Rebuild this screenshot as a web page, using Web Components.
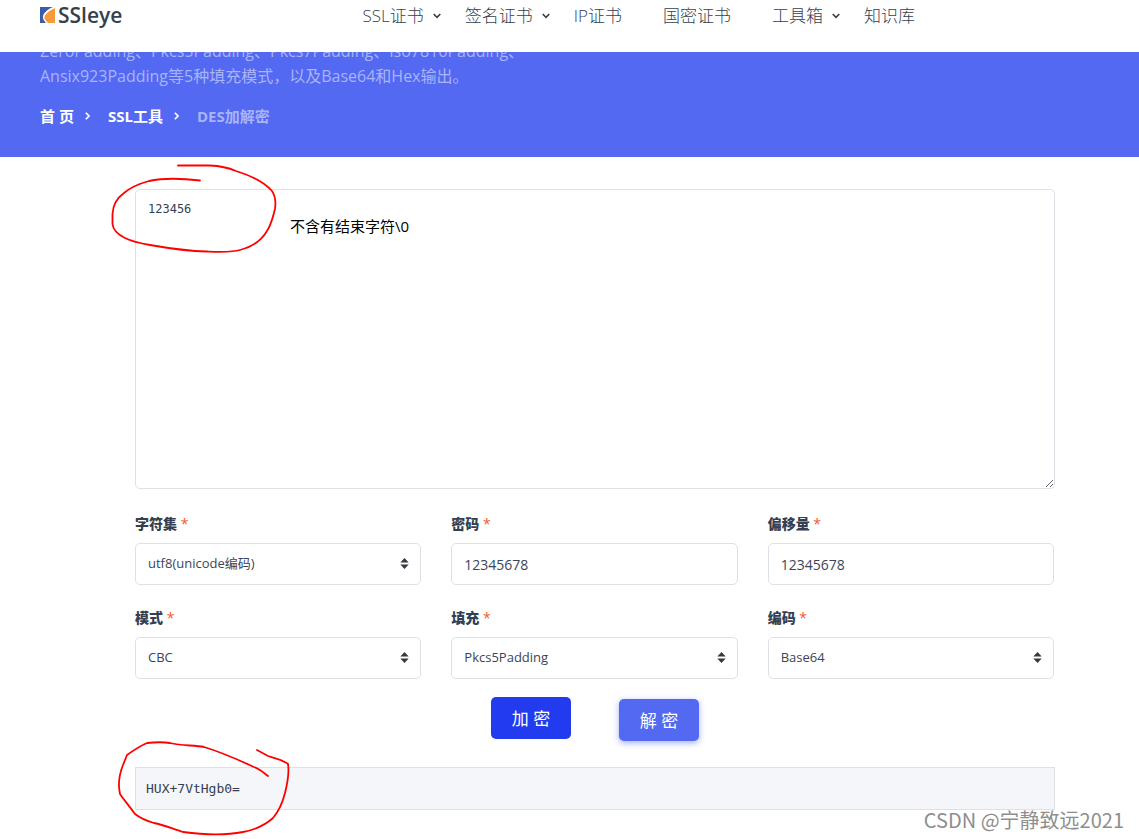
<!DOCTYPE html>
<html lang="zh-CN">
<head>
<meta charset="utf-8">
<title>DES加解密 - SSLeye</title>
<style>
body { margin: 0; background: #fff; color: #343f52; font-family: "Open Sans", "Noto Sans CJK SC", sans-serif; }
</style>
</head>
<body>
<des-page></des-page>
<script>
const define = (name, html, setup) => {
  const t = document.createElement('template');
  t.innerHTML = html;
  customElements.define(name, class extends HTMLElement {
    connectedCallback() {
      if (this.shadowRoot) return;
      const root = this.attachShadow({ mode: 'open' });
      root.append(t.content.cloneNode(true));
      if (setup) setup(this, root);
    }
  });
};

define('site-logo', `
<style>
:host { display: block; }
a { display: flex; align-items: center; gap: 2px; color: #34424f; text-decoration: none; font: 600 21px/28px "Open Sans", sans-serif; }
svg { display: block; }
</style>
<a href="#"><svg width="16" height="16" viewBox="0 0 16 16"><path fill="#3c5ba9" d="M0 0h14C8 2 4 6 3 10l3 6H0z"/><path fill="#f79a3a" d="M15 1v15H8C5 14 4 12 4 10 6 6 10 3 15 1z"/><path fill="none" stroke="#fff" stroke-width="1.4" d="M15 0C9 2 4 6 3.500 10c0 2 1.500 4 3.500 6"/></svg><span>SSleye</span></a>`);

define('nav-item', `
<style>
:host { display: block; }
a { display: flex; align-items: center; color: #343f52; text-decoration: none; font-weight: 300; font-size: 17px; line-height: 24px; white-space: nowrap; }
.slot { width: 17px; display: flex; justify-content: flex-end; }
svg { display: none; }
:host([menu]) svg { display: block; }
</style>
<a href="#"><slot></slot><span class="slot"><svg width="8" height="6" viewBox="0 0 8 6" fill="none" stroke="#343f52" stroke-width="1.600"><path d="M.7 1 4 4.400 7.300 1"/></svg></span></a>`);

define('site-header', `
<style>
:host { display: block; position: sticky; top: 0; z-index: 2; background: #fff; height: 52px; }
.bar { display: flex; padding: 1px 40px 0; }
nav { display: flex; gap: 24px; margin-left: 240px; padding-top: 3px; }
</style>
<header class="bar"><site-logo></site-logo>
<nav><nav-item menu>SSL证书</nav-item><nav-item menu>签名证书</nav-item><nav-item>IP证书</nav-item><nav-item>国密证书</nav-item><nav-item menu>工具箱</nav-item><nav-item>知识库</nav-item></nav></header>`);

define('page-banner', `
<style>
:host { display: block; background: #5369f2; margin-top: -13px; padding: 0 40px 29px; }
p { margin: 0; font-size: 16px; line-height: 25px; color: #a9b4f8; }
ol { display: flex; align-items: center; list-style: none; margin: 15px 0 0; padding: 0; font-size: 15px; line-height: 24px; font-weight: 700; color: #a9b4f8; }
li { display: flex; align-items: center; }
a { color: #fff; text-decoration: none; }
svg { margin: 0 18px 0 11px; }
</style>
<p>ZeroPadding、Pkcs5Padding、Pkcs7Padding、Iso7816Padding、<br>Ansix923Padding等5种填充模式，以及Base64和Hex输出。</p>
<ol><li><a href="#">首 页</a><svg width="5" height="8" viewBox="0 0 5 8" fill="none" stroke="#fff" stroke-width="1.600"><path d="M.8.8 4 4 .8 7.200"/></svg></li><li><a href="#">SSL工具</a><svg width="5" height="8" viewBox="0 0 5 8" fill="none" stroke="#fff" stroke-width="1.600"><path d="M.8.8 4 4 .8 7.200"/></svg></li><li>DES加解密</li></ol>`);

define('form-field', `
<style>
:host { display: block; min-width: 0; }
label { display: block; font-size: 14px; line-height: 20px; font-weight: 700; margin-bottom: 9px; }
label span { color: #f25a2b; font-weight: 400; }
.box { position: relative; }
input, select { display: block; box-sizing: border-box; width: 100%; height: 42px; padding: 0 12px; border: 1px solid #dee0e8; border-radius: 5px; background: #fff; color: #3b4557; font-family: inherit; font-size: 14px; appearance: none; outline: none; }
select { font-size: 13px; padding-bottom: 2px; }
svg { position: absolute; right: 12px; top: 15px; pointer-events: none; }
</style>
<label for="control"><b></b> <span>*</span></label><div class="box"></div>`, (el, root) => {
  root.querySelector('b').textContent = el.getAttribute('label');
  const box = root.querySelector('.box');
  const value = el.getAttribute('value');
  if (el.hasAttribute('select')) {
    const s = document.createElement('select');
    s.id = 'control';
    s.add(new Option(value));
    box.append(s);
    box.insertAdjacentHTML('beforeend', '<svg width="9" height="11" viewBox="0 0 9 11" fill="#343a40"><path d="M4.500 0 8.700 4.500H.3zM4.500 11 .3 6.500h8.400z"/></svg>');
  } else {
    const i = document.createElement('input');
    i.id = 'control';
    i.type = 'text';
    i.value = value;
    box.append(i);
  }
});

define('action-button', `
<style>
:host { display: block; align-self: flex-end; }
button { display: block; width: 80px; height: 42px; padding: 0 0 2px; border: 0; border-radius: 5px; background: #5369f2; color: #fff; font-family: inherit; font-size: 17px; box-shadow: 0 2px 6px #5369f28c; }
:host([active]) { align-self: flex-start; }
:host([active]) button { background: #233bee; box-shadow: none; }
</style>
<button type="button"><slot></slot></button>`);

define('cipher-form', `
<style>
:host { display: block; padding: 32px 84px 29px 135px; }
textarea { display: block; box-sizing: border-box; width: 100%; height: 300px; padding: 10px 12px; border: 1px solid #dee0e8; border-radius: 5px; color: #343f52; background: #fff; font: 12px/18px "DejaVu Sans Mono", monospace; resize: vertical; outline: none; }
.grid { display: grid; grid-template-columns: repeat(3, minmax(0, 1fr)); gap: 23px 30px; margin: 25px 1px 0 0; }
.actions { display: flex; justify-content: center; gap: 48px; height: 44px; margin: 18px 0 26px; }
pre { box-sizing: border-box; margin: 0; height: 43px; padding: 0 10px; border: 1px solid #dee0e8; background: #f5f6fa; font: 13px/41px "DejaVu Sans Mono", monospace; }
</style>
<form>
<textarea aria-label="待处理内容" spellcheck="false">123456</textarea>
<div class="grid">
<form-field select label="字符集" value="utf8(unicode编码)"></form-field>
<form-field label="密码" value="12345678"></form-field>
<form-field label="偏移量" value="12345678"></form-field>
<form-field select label="模式" value="CBC"></form-field>
<form-field select label="填充" value="Pkcs5Padding"></form-field>
<form-field select label="编码" value="Base64"></form-field>
</div>
<div class="actions"><action-button active>加 密</action-button><action-button>解 密</action-button></div>
<pre>HUX+7VtHgb0=</pre>
</form>`);

define('pen-notes', `
<style>
:host { position: absolute; inset: 0; z-index: 3; pointer-events: none; overflow: hidden; }
svg { position: absolute; left: 0; top: 0; overflow: visible; }
.note { position: absolute; left: 290px; top: 215px; color: #000; font-size: 15px; line-height: 22px; }
.mark { position: absolute; right: 15px; bottom: 5px; color: #8e8e8e; font: 20px/28px "Noto Sans CJK SC", sans-serif; text-shadow: 1px 1px 0 #fff; white-space: nowrap; }
</style>
<svg width="300" height="839" fill="none" stroke="#f00" stroke-width="1.800" stroke-linecap="round" stroke-linejoin="round">
<path d="M178 165.500h32C222 166 229 168 236 171C252 176 265 183 272 191C276 197 276 202 275 209C273 216 272 223 267 231C261 241 252 247 240 250C232 252.500 221 252 207 251.500C184 251 167 248 150 245C138 243 131 241 125 238C117 234 113 230 112.500 224V214C113 205 117 198 124 193C131 187 138 184 149 181C163 178 179 178 200 180.500"/>
<path d="M257 750 268 756C275 758 283 760 288 764C289.500 773 288 781 285 793C283 801 279 811 273 818C264 826 254 830 243 832C228 835 205 835 183 832C173 829 164 825 154 823C147 821 140 818 135 814C130 807 124 800 120 794C118 785 119 775 123 765L127 755C134 750 140 746 147 743C156 742 164 742 170 743C182 746 194 745 204 747C224 753 241 761 254 767C260 769 264 773 268 776"/>
</svg>
<span class="note">不含有结束字符\\0</span>
<span class="mark">CSDN @宁静致远2021</span>`);

define('des-page', `
<style>:host { display: block; position: relative; }</style>
<site-header></site-header><page-banner></page-banner><main><cipher-form></cipher-form></main><pen-notes></pen-notes>`);
</script>
</body>
</html>
